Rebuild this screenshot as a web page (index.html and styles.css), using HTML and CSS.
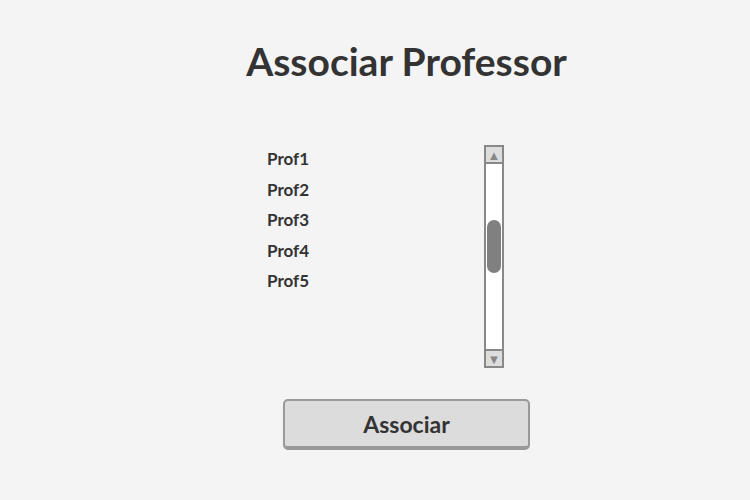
FILE: index.html
```html
<!DOCTYPE html>
<html lang="pt">
<head>
    <meta charset="UTF-8">
    <meta name="viewport" content="width=device-width, initial-scale=1.0">
    <title>Associar Professor</title>
    <link rel="stylesheet" href="styles.css">
</head>
<body>
<div class="container">
    <h1>Associar Professor</h1>
    <div class="picker">
        <ul class="prof-list">
            <li>Prof1</li>
            <li>Prof2</li>
            <li>Prof3</li>
            <li>Prof4</li>
            <li>Prof5</li>
        </ul>
        <div class="scrollbar">
            <div class="scroll-btn">&#9650;</div>
            <div class="scroll-track">
                <div class="scroll-thumb"></div>
            </div>
            <div class="scroll-btn">&#9660;</div>
        </div>
    </div>
    <button class="assoc-btn">Associar</button>
</div>
</body>
</html>
```

FILE: styles.css
```css
/* Estilos gerais */
body {
    margin: 0;
    padding: 0;
    background-color: #f4f4f4;
    font-family: Lato, "Open Sans", sans-serif;
    color: #333;
}

.container {
    width: 341px;
    margin-left: 236px;
    padding-top: 37px;
}

h1 {
    margin: 0;
    font-size: 39px;
    font-weight: 700;
    text-align: center;
    line-height: 48px;
    white-space: nowrap;
}

/* Lista de professores */
.picker {
    display: flex;
    margin-top: 60px;
    height: 223px;
}

.prof-list {
    list-style-type: none;
    margin: -1px 0 0;
    padding: 0 0 0 31px;
    width: 217px;
    font-size: 17px;
    font-weight: 700;
}

.prof-list li {
    line-height: 30.5px;
}

/* Barra de rolagem */
.scrollbar {
    width: 16px;
    border: 2px solid #888;
    background-color: #fff;
    display: flex;
    flex-direction: column;
}

.scroll-btn {
    height: 15px;
    background-color: #ddd;
    color: #888;
    font-size: 13px;
    line-height: 16px;
    text-align: center;
    overflow: hidden;
}

.scroll-track {
    flex-grow: 1;
    border-top: 2px solid #888;
    border-bottom: 2px solid #888;
    padding: 56px 1px 0;
}

.scroll-thumb {
    height: 53px;
    border-radius: 7px;
    background-color: #808080;
}

/* Botao */
.assoc-btn {
    display: block;
    margin: 31px 0 0 47px;
    width: 247px;
    height: 51px;
    border: 2px solid #999;
    border-bottom-width: 4px;
    border-radius: 5px;
    background-color: #dcdcdc;
    font-family: inherit;
    font-size: 23px;
    font-weight: 700;
    color: #333;
    cursor: pointer;
}
```
